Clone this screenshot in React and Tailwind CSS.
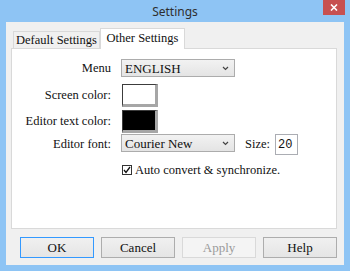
import React from 'react';

function Chevron() {
    return (
        <svg width="7" height="5" viewBox="0 0 7 5" className="shrink-0">
            <path d="M1 1 L3.5 3.5 L6 1" fill="none" stroke="#444" strokeWidth="1.2" />
        </svg>
    );
}

function Select({ value }) {
    return (
        <div className="w-[114px] h-[18px] border border-[#acacac] bg-gradient-to-b from-[#f2f2f2] to-[#e4e4e4] flex items-center justify-between pl-[3px] pr-[5px]">
            <span className="text-[13px] leading-none text-[#111]">{value}</span>
            <Chevron />
        </div>
    );
}

function ColorBox({ fill }) {
    return (
        <div className={`w-[36px] h-[23px] border border-[#3c3c3c] border-r-[3px] border-b-[3px] border-r-[#a6a6a6] border-b-[#a6a6a6] ${fill}`} />
    );
}

function Button({ children, variant }) {
    const base = 'w-[74px] h-[21px] flex items-center justify-center text-[13px] leading-none';
    if (variant === 'default') {
        return <div className={`${base} border border-[#3399ff] bg-gradient-to-b from-[#f0f0f0] to-[#e5e5e5] text-[#111]`}>{children}</div>;
    }
    if (variant === 'disabled') {
        return <div className={`${base} border border-[#d9d9d9] bg-[#f4f4f4] text-[#9a9a9a]`}>{children}</div>;
    }
    return <div className={`${base} border border-[#adadad] bg-gradient-to-b from-[#f0f0f0] to-[#e5e5e5] text-[#111]`}>{children}</div>;
}

export default function App() {
    return (
        <div className="w-[350px] h-[271px] bg-[#8ec4f4] flex flex-col overflow-hidden">
            {/* title bar */}
            <div className="relative h-[22px] shrink-0 flex items-center justify-center">
                <span className="text-[12px] text-[#2e2e2e] leading-none pt-[1px] font-['Noto_Sans',sans-serif]">Settings</span>
                <div className="absolute right-[5px] top-0 w-[22px] h-[15px] bg-[#c75050] flex items-center justify-center">
                    <svg width="8" height="7" viewBox="0 0 8 7">
                        <path d="M1 0.5 L7 6.5 M7 0.5 L1 6.5" stroke="#fff" strokeWidth="1.6" />
                    </svg>
                </div>
            </div>

            {/* client area */}
            <div className="mx-[6px] h-[243px] bg-[#f0f0f0] flex flex-col px-[5px] pt-[6px] font-['Liberation_Serif','DejaVu_Serif',serif]">
                {/* tabs */}
                <div className="flex items-end h-[20px] pl-[2px]">
                    <div className="h-[17px] w-[87px] border border-[#d9d9d9] border-b-0 bg-[#f0f0f0] flex items-center justify-center text-[12.5px] leading-none text-[#111] whitespace-nowrap">
                        Default Settings
                    </div>
                    <div className="relative z-10 h-[21px] mb-[-1px] w-[85px] border border-[#d9d9d9] border-b-0 bg-white flex items-center justify-center text-[12.5px] leading-none text-[#111] pb-[2px] whitespace-nowrap">
                        Other Settings
                    </div>
                </div>

                {/* panel */}
                <div className="w-[326px] h-[181px] border border-[#d9d9d9] bg-white flex flex-col pt-[10px] text-[12.5px]">
                    <div className="flex items-center h-[18px]">
                        <div className="w-[99px] text-right leading-none text-[#111]">Menu</div>
                        <div className="ml-[10px]"><Select value="ENGLISH" /></div>
                    </div>
                    <div className="flex items-center h-[23px] mt-[7px]">
                        <div className="w-[99px] text-right leading-none text-[#111]">Screen color:</div>
                        <div className="ml-[11px]"><ColorBox fill="bg-white" /></div>
                    </div>
                    <div className="flex items-center h-[23px] mt-[3px]">
                        <div className="w-[99px] text-right leading-none text-[#111]">Editor text color:</div>
                        <div className="ml-[11px]"><ColorBox fill="bg-black" /></div>
                    </div>
                    <div className="flex items-center h-[21px] mt-[1px]">
                        <div className="w-[99px] text-right leading-none text-[#111]">Editor font:</div>
                        <div className="ml-[10px] self-start"><Select value="Courier New" /></div>
                        <div className="ml-[10px] leading-none text-[#111]">Size:</div>
                        <div className="ml-[5px] w-[23px] h-[21px] border border-[#abadb3] bg-white flex items-center pl-[2px] text-[12px] leading-none text-[#111] font-['Liberation_Mono',monospace]">20</div>
                    </div>
                    <div className="flex items-center mt-[8px] ml-[110px] h-[14px]">
                        <div className="w-[10px] h-[10px] border border-[#333] bg-white flex items-center justify-center">
                            <svg width="8" height="8" viewBox="0 0 8 8">
                                <path d="M1 4 L3 6.5 L7 1" fill="none" stroke="#111" strokeWidth="1.3" />
                            </svg>
                        </div>
                        <span className="ml-[3px] leading-none text-[#111]">Auto convert &amp; synchronize.</span>
                    </div>
                </div>

                {/* buttons */}
                <div className="flex gap-[7px] mt-[8px] pl-[9px]">
                    <Button variant="default">OK</Button>
                    <Button>Cancel</Button>
                    <Button variant="disabled">Apply</Button>
                    <Button>Help</Button>
                </div>
            </div>
        </div>
    );
}
